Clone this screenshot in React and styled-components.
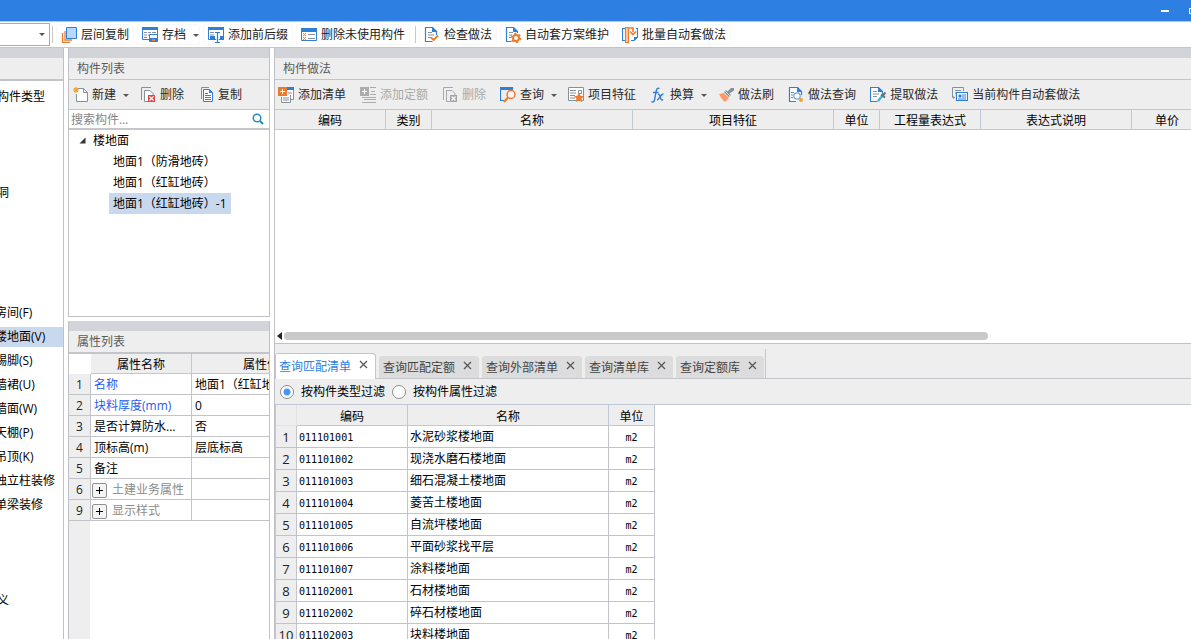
import styled, {createGlobalStyle} from "styled-components";
import React from "react";

const GlobalStyle = createGlobalStyle`
  * {
    box-sizing: border-box;
  }
  body {
    margin: 0;
    overflow: hidden;
    color: #000;
    font: 12px/20px "Open Sans", "Noto Sans CJK SC", sans-serif;
  }
  button, input, select {
    font: inherit;
    color: inherit;
  }
`
const Page = styled.div`
  display: flex;
  flex-direction: column;
  height: 100vh;
  background: #fff;
`
const TitleBar = styled.header`
  display: flex;
  justify-content: flex-end;
  flex: none;
  height: 21px;
  overflow: hidden;
  background: #2d7fe1;
`
const WindowButtons = styled.div`
  display: flex;
  margin-right: -16px;
`
const WindowButton = styled.button`
  display: flex;
  align-items: center;
  justify-content: center;
  width: 28px;
  padding: 0;
  border: 0;
  background: none;
`
const MainToolbar = styled.nav`
  display: flex;
  align-items: center;
  flex: none;
  height: 27px;
  overflow: hidden;
  border-top: 1px solid #b9cbe2;
  border-bottom: 1px solid #c5c6c9;
`
const FloorSelectBox = styled.div`
  position: relative;
  flex: none;
  width: 50px;
`
const FloorSelect = styled.select`
  display: block;
  width: 100%;
  height: 23px;
  border: 1px solid #a9abb0;
  border-left: 0;
  border-radius: 0;
  background: #fff;
  appearance: none;
`
const SelectArrow = styled.span`
  position: absolute;
  right: 5px;
  top: 10px;
  border: 3px solid transparent;
  border-top-color: #555;
  border-bottom: 0;
  pointer-events: none;
`
const Divider = styled.span`
  flex: none;
  width: 1px;
  height: 17px;
  margin: 0 3px 0 2px;
  background: #c8c8c8;
`
const Caret = styled.span`
  margin: 2px -4px 0 3px;
  border: 3px solid transparent;
  border-top-color: #555;
  border-bottom: 0;
`
const ToolButton = styled.button`
  display: flex;
  align-items: center;
  flex: none;
  gap: 4px;
  height: 21px;
  padding: 0 4px;
  margin-right: 3px;
  border: 1px solid #f8f8f8;
  border-radius: 3px;
  background: none;
  color: #222;
  white-space: nowrap;
`
const PanelButton = styled(ToolButton)`
  padding: 0;
  margin: 0;
  border: 0;
  color: #2a2a2a;

  &:disabled {
    color: #a9a9a9;
  }
  ${Caret} {
    margin-right: -3px;
  }
`
const Workspace = styled.div`
  display: flex;
  flex: 1;
  gap: 4px;
  min-height: 0;
`
const TypeColumn = styled.aside`
  flex: none;
  width: 64px;
  overflow: hidden;
  border-right: 1px solid #bfc1c7;
`
const MiddleColumn = styled.div`
  display: flex;
  flex-direction: column;
  flex: none;
  gap: 4px;
  width: 202px;
`
const RightColumn = styled.main`
  display: flex;
  flex-direction: column;
  flex: 1;
  min-width: 0;
`
const Panel = styled.section`
  display: flex;
  flex-direction: column;
  flex: ${p => p.$height ? `0 0 ${p.$height}` : "1"};
  min-height: 0;
  overflow: hidden;
  border: solid #bfc1c7;
  border-width: ${p => p.$borders || "0 1px 1px"};
  background: #fff;
`
const Strip = styled.div`
  flex: none;
  height: 10px;
  background: #d3d4d9;
`
const PanelTitle = styled.h2`
  flex: none;
  height: ${p => p.$thick ? 23 : 22}px;
  margin: 0;
  padding-left: 8px;
  border-bottom: ${p => p.$thick ? 2 : 1}px solid #c2c5ca;
  background: #eee;
  color: #5a5a5a;
  font-size: 12px;
  font-weight: 400;
  line-height: 22px;
`
const PanelToolbar = styled.div`
  display: flex;
  align-items: center;
  flex: none;
  gap: 14px;
  height: 30px;
  padding-left: 3px;
  border-bottom: 1px solid #c2c5ca;
  background: #eee;
`
const TypeList = styled.ul`
  margin: 4px 0 0;
  padding: 0;
  list-style: none;
`
const TypeItem = styled.li`
  margin-top: ${p => (p.$skip || 0) * 24}px;
  padding: 2px 0;
`
const TypeLink = styled.a`
  display: block;
  height: 20px;
  background: ${p => p.$active ? "#c8d9ef" : "none"};
  color: #000;
  text-decoration: none;
  white-space: nowrap;
  text-indent: ${p => p.$root ? -3 : -5}px;
`
const SearchBox = styled.label`
  display: flex;
  align-items: center;
  flex: none;
  height: 20px;
  padding: 0 5px 0 2px;
  border-bottom: 2px solid #c4c6cb;
`
const SearchInput = styled.input`
  flex: 1;
  min-width: 0;
  height: 18px;
  padding: 1px 0 0;
  border: 0;
  outline: 0;
  background: none;

  &::placeholder {
    color: #858585;
  }
`
const TreeList = styled.ul`
  margin: 0;
  padding: 0;
  list-style: none;
`
const TreeRoot = styled.button`
  display: flex;
  align-items: center;
  gap: 7px;
  height: 21px;
  padding: 0 0 0 10px;
  border: 0;
  background: none;
`
const TreeLeaf = styled.button`
  display: block;
  height: 21px;
  margin-left: 40px;
  padding: 0 4px;
  border: 0;
  background: ${p => p.$selected ? "#c8d9ef" : "none"};
  line-height: 21px;
  white-space: nowrap;
`
const Table = styled.table`
  flex: none;
  width: ${p => p.$width}px;
  border-collapse: separate;
  border-spacing: 0;
  table-layout: fixed;
`
const HeadCell = styled.th`
  width: ${p => p.$width}px;
  height: ${p => p.$height || 20}px;
  padding: 2px 0 0;
  border: solid #bfc8d4;
  border-width: 0 1px 1px 0;
  background: #eee;
  font-weight: 400;
  line-height: 17px;
`
const Corner = styled.td`
  width: ${p => p.$width}px;
  padding: 0;
  background: ${p => p.$gray ? "#eee" : "#fff"};
  border: solid #e2e3e5;
  border-width: ${p => p.$gray ? "0 1px 1px 0" : "0"};
`
const Cell = styled.td`
  height: 21px;
  padding: 2px 0 0 3px;
  overflow: hidden;
  border: solid #c3c4c9;
  border-width: 0 1px 1px 0;
  line-height: 18px;
  white-space: nowrap;
  color: ${p => p.$tone || "#000"};
`
const RowNumber = styled.th`
  padding: 2px 0 0;
  border: solid #c3c4c9;
  border-width: 0 1px 1px 0;
  background: #eee;
  color: #222;
  font-weight: 400;
  line-height: 18px;
`
const Gutter = styled.div`
  flex: 1;
  width: 21px;
  background: #eee;
`
const GroupLabel = styled.span`
  display: flex;
  align-items: center;
  gap: 5px;
  margin-left: -2px;
`
const ExpandButton = styled.button`
  display: flex;
  align-items: center;
  justify-content: center;
  width: 15px;
  height: 15px;
  padding: 0;
  border: 1px solid #909090;
  border-radius: 2px;
  background: #f4f4f4;
`
const ScrollRow = styled.div`
  display: flex;
  align-items: center;
  gap: 2px;
  height: 15px;
  margin-top: auto;
  padding-left: 2px;
`
const ScrollThumb = styled.div`
  width: 77%;
  height: 8px;
  border-radius: 4px;
  background: #c9c9c9;
`
const QueryArea = styled.section`
  display: flex;
  flex-direction: column;
  flex: 1;
  min-height: 0;
  overflow: hidden;
  border-left: 1px solid #bfc1c7;
  background: #eee;
`
const TabBar = styled.div`
  display: flex;
  align-items: flex-end;
  flex: none;
  gap: 3px;
  height: 35px;
  box-shadow: inset 0 -1px #c2c5ca;
`
const Tab = styled.div`
  display: flex;
  align-items: center;
  gap: 8px;
  height: ${p => p.$active ? 26 : 22}px;
  padding: ${p => p.$active ? "2px 8px 0 3px" : "1px 7px 0 4px"};
  margin-bottom: ${p => p.$active ? 0 : 1}px;
  border-left: ${p => p.$active ? "1px solid #c2c5ca" : "0"};
  border-radius: 3px 3px 0 0;
  background: ${p => p.$active ? "#fff" : "#dcdcdc"};
  box-shadow: ${p => p.$active ? "inset -1px 1px #c2c5ca" : "none"};
  color: ${p => p.$active ? "#2d7fe1" : "#444"};
`
const TabLabel = styled.button`
  padding: 0;
  border: 0;
  background: none;
`
const TabClose = styled.button`
  display: flex;
  padding: 0;
  margin-bottom: 5px;
  border: 0;
  background: none;
`
const TabEnd = styled.span`
  width: 1px;
  height: 30px;
  margin-left: -2px;
  background: #c2c5ca;
`
const FilterBar = styled.fieldset`
  display: flex;
  flex: none;
  gap: 7px;
  height: 26px;
  margin: 0;
  padding: 3px 0 0 5px;
  border: 0;
  border-bottom: 1px solid #bfc8d4;
`
const FilterLabel = styled.label`
  display: flex;
  align-items: center;
  gap: 7px;
  height: 20px;
`
const Radio = styled.input`
  width: 14px;
  height: 14px;
  margin: 0;
  border: 1px solid #8c8c8c;
  border-radius: 50%;
  background: #fff;
  appearance: none;

  &:checked {
    background: radial-gradient(circle, #4596f7 3px, #fff 4px);
  }
`
const ResultArea = styled.div`
  flex: 1;
  min-height: 0;
  overflow: hidden;
  border-left: 1px solid #bfc8d4;
  background: #fff;
`
const ResultCell = styled(Cell)`
  height: 22px;
  padding: 2px 0 0 ${p => p.$center ? 0 : 2}px;
  line-height: 19px;
  text-align: ${p => p.$center ? "center" : "left"};
  font-family: "DejaVu Sans Mono", "Noto Sans CJK SC", monospace;
  font-size: ${p => p.$code ? 10 : 12}px;
`
const ResultNumber = styled(RowNumber)`
  line-height: 19px;
  font-size: 13px;
`
const Svg = styled.svg`
  display: block;
  flex: none;
`

const BLUE = "#2d7fd8";
const ORANGE = "#ee7b2d";
const GRAY = "#84919b";

const icons = {
    layers: <>
        <path d="M1.5 6v9.5H9M4 4v9h7" fill="none" stroke={ORANGE} strokeWidth="1.3"/>
        <path d="M5.5.5h10v11h-10z" fill="#b9d8fc" stroke={BLUE}/>
    </>,
    archive: <>
        <path d="M.5.5h15v12H.5z" fill="#fff" stroke={BLUE}/>
        <path d="M0 0h16v3H0z" fill={BLUE}/>
        <path d="M2 5.5h3m1 0h3m1 0h4M2 8h3m1 0h1M2 10.5h3" stroke={GRAY}/>
        <path d="M7.5 7.5h8v7h-8z" fill="#fff" stroke={BLUE}/>
        <path d="M8 11h7v4H8z" fill={BLUE}/>
        <path d="M10 12h3v2h-3z" fill={ORANGE}/>
    </>,
    affix: <>
        <path d="M.5.5h15v12H.5z" fill="#fff" stroke={BLUE}/>
        <path d="M0 0h16v3H0z" fill={BLUE}/>
        <path d="M2 5.5h6M2 8h4" stroke={GRAY}/>
        <path d="M2 9h5v4H2zM12 9h4v4h-4z" fill={BLUE}/>
        <path d="M6 5.500h7M9.500 6v9M7 15.500h5" stroke="#fff" strokeWidth="2.600"/>
        <path d="M7 5.500h5M9.500 6v9M7 15.500h5" stroke={BLUE} strokeWidth="1.200"/>
    </>,
    unused: <>
        <path d="M.5 1.5h15v12H.5z" fill="#fff" stroke={BLUE}/>
        <path d="M0 1h16v4H0z" fill={BLUE}/>
        <path d="M2 6l3 3M5 6l-3 3M2 10l3 3M5 10l-3 3" stroke={ORANGE}/>
        <path d="M7 7.500h7M7 11.500h7" stroke={GRAY}/>
    </>,
    check: <>
        <path d="M12.500 8V4.500l-4-4h-7v14h7" fill="#fff" stroke={BLUE} strokeWidth="1.200"/>
        <path d="M8 0v5h5z" fill={BLUE}/>
        <path d="M4 5.500h4M4 8h6M4 10.500h3" stroke={GRAY}/>
        <path d="M7 10.500l2.500 2.500L14 8.500" fill="none" stroke={ORANGE} strokeWidth="1.800"/>
    </>,
    gear: <>
        <path d="M12.500 6V4.500l-4-4h-7v14h5" fill="#fff" stroke={BLUE} strokeWidth="1.200"/>
        <path d="M8 0v5h5z" fill={BLUE}/>
        <path d="M4 5.500h4M4 8h3M4 10.500h2" stroke={GRAY}/>
        <circle cx="11" cy="11" r="3" fill="#fff" stroke={ORANGE} strokeWidth="2"/>
        <circle cx="11" cy="11" r="4.500" fill="none" stroke={ORANGE} strokeWidth="1.400" strokeDasharray="2.300 2.400"/>
    </>,
    batch: <>
        <path d="M5 1.500H.5v12H4M9 13.500h3l3.500-3.500V1.500H14" fill="#fff" stroke={BLUE} strokeWidth="1.200"/>
        <path d="M12 14v-4h4z" fill={BLUE}/>
        <path d="M3.500.5h3v15h-3z" fill="#fbd0ae" stroke={ORANGE} strokeWidth="1.200"/>
        <path d="M7 1h4v4M8 4.500l3 3 3-3" fill="none" stroke={ORANGE} strokeWidth="1.600"/>
    </>,
    create: <>
        <path d="M6 1.500h5.500l4 4v9h-11V7" fill="#fff" stroke={GRAY}/>
        <path d="M11.500 1.500v4h4" fill="none" stroke={GRAY}/>
        <path d="M4 0v6M1 3h6M2 1l4 4M6 1L2 5" stroke="#f4a12c" strokeWidth="1.100"/>
    </>,
    remove: <>
        <path d="M1.500 13V.5H11" fill="none" stroke={GRAY}/>
        <path d="M8 14.500H4.500v-11H10l3 3V8" fill="#fff" stroke={GRAY}/>
        <path d="M8 8h7v7H8z" fill="#d9494a"/>
        <path d="M9.500 9.500l4 4M13.500 9.500l-4 4" stroke="#fff" strokeWidth="1.200"/>
    </>,
    removeOff: <>
        <path d="M1.500 13V.5H11" fill="none" stroke="#aaa"/>
        <path d="M8 14.500H4.500v-11H10l3 3V8" fill="#eee" stroke="#aaa"/>
        <path d="M8 8h7v7H8z" fill="#a4a4a4"/>
        <path d="M9.500 9.500l4 4M13.500 9.500l-4 4" stroke="#fff" strokeWidth="1.200"/>
    </>,
    copy: <>
        <path d="M3.500 12V.5H11" fill="none" stroke={GRAY}/>
        <path d="M5.500 2.500h6l3 3v9h-9z" fill="#fff" stroke={BLUE}/>
        <path d="M11 2v4h4z" fill={BLUE}/>
        <path d="M7 6.500h3M7 8.500h6M7 10.500h6M7 12.500h6" stroke={BLUE}/>
    </>,
    addList: <>
        <path d="M10 1.500h5.500v11H13M3.500 10v5.500h9V8" fill="#fff" stroke={GRAY}/>
        <path d="M9 0h7v3H9z" fill={BLUE}/>
        <path d="M10 6h4M5 11h6M5 13h6" stroke={GRAY}/>
        <path d="M0 0h9v9H0z" fill={ORANGE}/>
        <path d="M4.500 2v5M2 4.500h5" stroke="#fff"/>
    </>,
    addQuota: <>
        <path d="M0 0h9v9H0z" fill="#acacac"/>
        <path d="M4.500 2v5M2 4.500h5" stroke="#fff"/>
        <path d="M10 .5h6M11 4.500h4M10 7.500h6M2 10.500h14M4 12.500h12M2 15.500h14" stroke="#acacac"/>
    </>,
    query: <>
        <path d="M4 13.500H.5V.5h12V3" fill="none" stroke={BLUE} strokeWidth="1.200"/>
        <path d="M0 0h13v3H0z" fill={BLUE}/>
        <circle cx="11" cy="7.500" r="4" fill="#f7f7f7" stroke={ORANGE} strokeWidth="1.500"/>
        <path d="M8 10.500L4 15" stroke={ORANGE} strokeWidth="2.200"/>
    </>,
    feature: <>
        <path d="M.5.5h15v13H.5z" fill="#fff" stroke={GRAY}/>
        <path d="M2 3.500h6M2 6h6M2 8.500h5M2 11h5M10.500 3.500h3v3h-3z" fill="none" stroke={GRAY}/>
        <path d="M11 5.500l1.600 3.300 3.400.4-2.500 2.400.7 3.500-3.200-1.700-3.200 1.700.7-3.500L6 9.200l3.400-.4z" fill={ORANGE}/>
    </>,
    fx: <path
        d="M9.500 1.500C7 .2 6.300 3 5.800 6L4.500 13c-.4 2.200-1.500 2.500-3.200 1.700M3 5.500h5.500M8 7.500c2.500-1.500 2 6 4 5.500l1-.5M13.500 7c-2.500-.5-4 5.500-6.500 6"
        fill="none" stroke={BLUE} strokeWidth="1.400"/>,
    brush: <>
        <path d="M1 7l5-1 5 5-4 4c-1-1-1 0-2-2-1-1-2-2-4-6z" fill="#fb9a66"/>
        <path d="M6 5l5 5 2-2-1.500-1.500L16 3.500V1h-3L9.500 4.500 8 3z" fill={GRAY}/>
        <path d="M7 4l5 5" stroke="#eee" strokeWidth=".8"/>
    </>,
    methodQuery: <>
        <path d="M13.500 8V4.500l-4-4h-8v14H8" fill="#fff" stroke={BLUE} strokeWidth="1.200"/>
        <path d="M9 0v5h5z" fill={BLUE}/>
        <path d="M3 5.500h3M3 8h2M3 10.500h2" stroke={GRAY}/>
        <circle cx="9" cy="9" r="3.200" fill="#fff" stroke="#6c9fe0" strokeWidth="1.200"/>
        <circle cx="13" cy="13" r="2" fill="#f4a12c"/>
    </>,
    extract: <>
        <path d="M12.500 7V4.500l-4-4h-8v14h7" fill="#fff" stroke={BLUE} strokeWidth="1.200"/>
        <path d="M8 0v5h5z" fill={BLUE}/>
        <path d="M3 4.500h4M3 7h6M3 9.500h4" stroke={GRAY}/>
        <path d="M8 14l5-6" stroke="#37b6dc" strokeWidth="2.400"/>
        <path d="M11 7.500l4 3M12.500 9L15.500 5.500" stroke="#667078" strokeWidth="2"/>
    </>,
    autoApply: <>
        <path d="M3 10.500H.5V.5h11V4M3 3.500h6M3 6h1" fill="none" stroke={GRAY}/>
        <path d="M4.500 5.500h11v8h-11z" fill="#fff" stroke={BLUE} strokeWidth="1.200"/>
        <path d="M7 8h2v2H7zM10 8h4M10 10h4M6 12h8" fill={BLUE} stroke={BLUE}/>
        <path d="M1 9l2 1.500L1 12z" fill={ORANGE}/>
    </>,
}

const Icon = ({name}) => (
    <Svg width="16" height="16" viewBox="0 0 16 16" aria-hidden="true">{icons[name]}</Svg>
)

const mainTools = [
    [
        {icon: "layers", label: "层间复制"},
        {icon: "archive", label: "存档", menu: true},
        {icon: "affix", label: "添加前后缀"},
        {icon: "unused", label: "删除未使用构件"},
    ],
    [
        {icon: "check", label: "检查做法"},
        {icon: "gear", label: "自动套方案维护"},
        {icon: "batch", label: "批量自动套做法"},
    ],
]

const listTools = [
    {icon: "create", label: "新建", menu: true},
    {icon: "remove", label: "删除"},
    {icon: "copy", label: "复制"},
]

const methodTools = [
    {icon: "addList", label: "添加清单"},
    {icon: "addQuota", label: "添加定额", disabled: true},
    {icon: "removeOff", label: "删除", disabled: true},
    {icon: "query", label: "查询", menu: true},
    {icon: "feature", label: "项目特征"},
    {icon: "fx", label: "换算", menu: true},
    {icon: "brush", label: "做法刷"},
    {icon: "methodQuery", label: "做法查询"},
    {icon: "extract", label: "提取做法"},
    {icon: "autoApply", label: "当前构件自动套做法"},
]

const types = [
    {label: "构件类型", root: true},
    {label: "洞", root: true, skip: 3},
    {label: "房间(F)", skip: 4},
    {label: "楼地面(V)"},
    {label: "踢脚(S)"},
    {label: "墙裙(U)"},
    {label: "墙面(W)"},
    {label: "天棚(P)"},
    {label: "吊顶(K)"},
    {label: "独立柱装修"},
    {label: "单梁装修"},
    {label: "义", root: true, skip: 3},
]

const leaves = ["地面1（防滑地砖）", "地面1（红缸地砖）", "地面1（红缸地砖）-1"]

const properties = [
    {no: 1, name: "名称", value: "地面1（红缸地砖）-1", key: true},
    {no: 2, name: "块料厚度(mm)", value: "0", key: true},
    {no: 3, name: "是否计算防水...", value: "否"},
    {no: 4, name: "顶标高(m)", value: "层底标高"},
    {no: 5, name: "备注", value: ""},
    {no: 6, name: "土建业务属性", value: "", group: true},
    {no: 9, name: "显示样式", value: "", group: true},
]

const methodColumns = [
    ["编码", 111],
    ["类别", 46],
    ["名称", 201],
    ["项目特征", 201],
    ["单位", 46],
    ["工程量表达式", 101],
    ["表达式说明", 151],
    ["单价", 71],
]

const tabs = ["查询匹配清单", "查询匹配定额", "查询外部清单", "查询清单库", "查询定额库"]

const results = [
    ["011101001", "水泥砂浆楼地面"],
    ["011101002", "现浇水磨石楼地面"],
    ["011101003", "细石混凝土楼地面"],
    ["011101004", "菱苦土楼地面"],
    ["011101005", "自流坪楼地面"],
    ["011101006", "平面砂浆找平层"],
    ["011101007", "涂料楼地面"],
    ["011102001", "石材楼地面"],
    ["011102002", "碎石材楼地面"],
    ["011102003", "块料楼地面"],
]

const Tools = ({items, as: Button}) => items.map(item => (
    <Button key={item.label} type="button" disabled={item.disabled}>
        <Icon name={item.icon}/>
        {item.label}
        {item.menu && <Caret/>}
    </Button>
))

const ComponentList = () => {
    const [selected, setSelected] = React.useState(2);

    return (
        <Panel $height="269px">
            <Strip/>
            <PanelTitle>构件列表</PanelTitle>
            <PanelToolbar>
                <Tools items={listTools} as={PanelButton}/>
            </PanelToolbar>
            <SearchBox>
                <SearchInput placeholder="搜索构件..." aria-label="搜索构件"/>
                <Svg width="12" height="12" viewBox="0 0 12 12">
                    <circle cx="5" cy="5" r="3.800" fill="none" stroke="#2586c0" strokeWidth="1.400"/>
                    <path d="M8 8l3 3" stroke="#2586c0" strokeWidth="2"/>
                </Svg>
            </SearchBox>
            <TreeList>
                <li>
                    <TreeRoot type="button">
                        <Svg width="7" height="7" viewBox="0 0 7 7"><path d="M6.500.5v6h-6z" fill="#333"/></Svg>
                        楼地面
                    </TreeRoot>
                    <TreeList>
                        {leaves.map((leaf, i) => (
                            <li key={leaf}>
                                <TreeLeaf type="button" $selected={i === selected} onClick={() => setSelected(i)}>
                                    {leaf}
                                </TreeLeaf>
                            </li>
                        ))}
                    </TreeList>
                </li>
            </TreeList>
        </Panel>
    );
}

const PropertyList = () => (
    <Panel $borders="0 1px">
        <Strip/>
        <PanelTitle $thick>属性列表</PanelTitle>
        <Table $width={262}>
            <thead>
                <tr>
                    <Corner $width={22}/>
                    <HeadCell $width={101}>属性名称</HeadCell>
                    <HeadCell $width={139}>属性值</HeadCell>
                </tr>
            </thead>
            <tbody>
                {properties.map(p => (
                    <tr key={p.no}>
                        <RowNumber scope="row">{p.no}</RowNumber>
                        <Cell $tone={p.key ? "#1f5cf0" : p.group ? "#8c8c8c" : "#000"}>
                            {p.group
                                ? <GroupLabel>
                                    <ExpandButton type="button" aria-label={p.name}>
                                        <Svg width="7" height="7" viewBox="0 0 7 7">
                                            <path d="M3.500 0v7M0 3.500h7" stroke="#000"/>
                                        </Svg>
                                    </ExpandButton>
                                    {p.name}
                                </GroupLabel>
                                : p.name}
                        </Cell>
                        <Cell>{p.value}</Cell>
                    </tr>
                ))}
            </tbody>
        </Table>
        <Gutter/>
    </Panel>
)

const MethodPanel = () => (
    <Panel $height="296px" $borders="0 0 1px 1px">
        <Strip/>
        <PanelTitle>构件做法</PanelTitle>
        <PanelToolbar>
            <Tools items={methodTools} as={PanelButton}/>
        </PanelToolbar>
        <Table $width={928}>
            <thead>
                <tr>
                    {methodColumns.map(([label, width]) => (
                        <HeadCell key={label} $width={width}>{label}</HeadCell>
                    ))}
                </tr>
            </thead>
        </Table>
        <ScrollRow>
            <Svg width="5" height="8" viewBox="0 0 5 8"><path d="M5 0v8L0 4z" fill="#222"/></Svg>
            <ScrollThumb/>
        </ScrollRow>
    </Panel>
)

const QueryPanel = () => {
    const [active, setActive] = React.useState(0);
    const [filter, setFilter] = React.useState("type");

    return (
        <QueryArea>
            <TabBar>
                {tabs.map((tab, i) => (
                    <Tab key={tab} $active={i === active}>
                        <TabLabel type="button" onClick={() => setActive(i)}>{tab}</TabLabel>
                        <TabClose type="button" aria-label={"关闭" + tab}>
                            <Svg width="9" height="9" viewBox="0 0 9 9">
                                <path d="M1 1l7 7M8 1L1 8" stroke="#555" strokeWidth="1.200"/>
                            </Svg>
                        </TabClose>
                    </Tab>
                ))}
                <TabEnd/>
            </TabBar>
            <FilterBar>
                <FilterLabel>
                    <Radio type="radio" name="filter" checked={filter === "type"} onChange={() => setFilter("type")}/>
                    按构件类型过滤
                </FilterLabel>
                <FilterLabel>
                    <Radio type="radio" name="filter" checked={filter === "prop"} onChange={() => setFilter("prop")}/>
                    按构件属性过滤
                </FilterLabel>
            </FilterBar>
            <ResultArea>
                <Table $width={379}>
                    <thead>
                        <tr>
                            <Corner $width={21} $gray/>
                            <HeadCell $width={111} $height={21}>编码</HeadCell>
                            <HeadCell $width={201} $height={21}>名称</HeadCell>
                            <HeadCell $width={46} $height={21}>单位</HeadCell>
                        </tr>
                    </thead>
                    <tbody>
                        {results.map(([code, name], i) => (
                            <tr key={code}>
                                <ResultNumber scope="row">{i + 1}</ResultNumber>
                                <ResultCell $code>{code}</ResultCell>
                                <ResultCell>{name}</ResultCell>
                                <ResultCell $code $center>m2</ResultCell>
                            </tr>
                        ))}
                    </tbody>
                </Table>
            </ResultArea>
        </QueryArea>
    );
}

const App = () => {
    return (
        <Page>
            <GlobalStyle/>
            <TitleBar>
                <WindowButtons>
                    <WindowButton type="button" aria-label="最小化">
                        <Svg width="8" height="8" viewBox="0 0 8 8"><path d="M0 3h8v2H0z" fill="#fff"/></Svg>
                    </WindowButton>
                    <WindowButton type="button" aria-label="还原">
                        <Svg width="8" height="8" viewBox="0 0 8 8">
                            <path d="M.5 1.500h5v5h-5zM2.500 1V.5h5v5H6" fill="none" stroke="#fff"/>
                        </Svg>
                    </WindowButton>
                </WindowButtons>
            </TitleBar>
            <MainToolbar>
                <FloorSelectBox>
                    <FloorSelect aria-label="楼层"/>
                    <SelectArrow/>
                </FloorSelectBox>
                {mainTools.map((group, i) => (
                    <React.Fragment key={i}>
                        <Divider/>
                        <Tools items={group} as={ToolButton}/>
                    </React.Fragment>
                ))}
            </MainToolbar>
            <Workspace>
                <TypeColumn>
                    <Strip/>
                    <PanelTitle $thick/>
                    <TypeList>
                        {types.map(t => (
                            <TypeItem key={t.label} $skip={t.skip}>
                                <TypeLink href="#" $root={t.root} $active={t.label === "楼地面(V)"}>{t.label}</TypeLink>
                            </TypeItem>
                        ))}
                    </TypeList>
                </TypeColumn>
                <MiddleColumn>
                    <ComponentList/>
                    <PropertyList/>
                </MiddleColumn>
                <RightColumn>
                    <MethodPanel/>
                    <QueryPanel/>
                </RightColumn>
            </Workspace>
        </Page>
    );
}

export default App;
